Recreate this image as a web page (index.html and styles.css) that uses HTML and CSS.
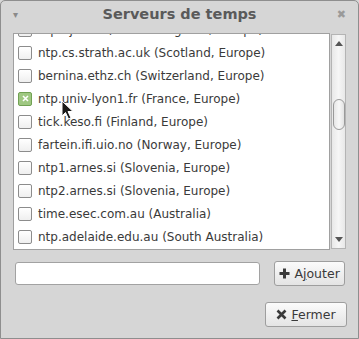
FILE: index.html
```html
<!DOCTYPE html>
<html>
<head>
<meta charset="utf-8">
<link rel="stylesheet" href="styles.css">
</head>
<body>
<div class="window">
  <div class="titlebar">
    <span class="tb-menu">&#9662;</span>
    <span class="title">Serveurs de temps</span>
    <span class="tb-close">&#10006;</span>
  </div>
  <div class="listrow">
    <div class="list">
      <div class="items">
        <div class="item"><span class="cb"></span><span class="lbl">ntp2.ja.net (United Kingdom, Europe)</span></div>
        <div class="item"><span class="cb"></span><span class="lbl">ntp.cs.strath.ac.uk (Scotland, Europe)</span></div>
        <div class="item"><span class="cb"></span><span class="lbl">bernina.ethz.ch (Switzerland, Europe)</span></div>
        <div class="item"><span class="cb checked"><svg width="7" height="7" viewBox="0 0 7 7"><path d="M1 1L6 6M6 1L1 6" stroke="#fff" stroke-width="1.6"/></svg></span><span class="lbl">ntp.univ-lyon1.fr (France, Europe)</span></div>
        <div class="item"><span class="cb"></span><span class="lbl">tick.keso.fi (Finland, Europe)</span></div>
        <div class="item"><span class="cb"></span><span class="lbl">fartein.ifi.uio.no (Norway, Europe)</span></div>
        <div class="item"><span class="cb"></span><span class="lbl">ntp1.arnes.si (Slovenia, Europe)</span></div>
        <div class="item"><span class="cb"></span><span class="lbl">ntp2.arnes.si (Slovenia, Europe)</span></div>
        <div class="item"><span class="cb"></span><span class="lbl">time.esec.com.au (Australia)</span></div>
        <div class="item"><span class="cb"></span><span class="lbl">ntp.adelaide.edu.au (South Australia)</span></div>
      </div>
    </div>
    <div class="scrollbar">
      <span class="arrow up"></span>
      <span class="thumb"></span>
      <span class="arrow down"></span>
    </div>
  </div>
  <div class="entryrow">
    <div class="entry"></div>
    <div class="btn btn-add"><svg width="11" height="11" viewBox="0 0 11 11"><path d="M4 0.5h3v3.5h3.5v3h-3.5v3.5h-3v-3.5h-3.5v-3h3.5z" fill="#3a3a3a"/></svg><span>A<u>j</u>outer</span></div>
  </div>
  <div class="bottomrow">
    <div class="btn btn-close"><svg width="11" height="11" viewBox="0 0 11 11"><path d="M1.5 1.5L9.5 9.5M9.5 1.5L1.5 9.5" stroke="#3a3a3a" stroke-width="2.6"/></svg><span><u>F</u>ermer</span></div>
  </div>
  <svg class="cursor" width="14" height="20" viewBox="0 0 14 20"><path d="M1 1L1 16L4.5 12.5L7.5 19L10 18L7 11.5L12 11.5Z" fill="#1a1a1a" stroke="#fff" stroke-width="1"/></svg>
</div>
</body>
</html>
```
FILE: styles.css
```css
* { box-sizing: border-box; }
html, body { margin: 0; padding: 0; background: #d6d6d6; }
body { width: 359px; height: 339px; overflow: hidden; font-family: "DejaVu Sans", sans-serif; }
.window {
  position: relative;
  width: 359px; height: 339px;
  background: #d6d6d6;
  border: 1px solid #8e8e8e;
  border-radius: 5px 5px 0 0;
  display: flex; flex-direction: column;
}
.titlebar {
  height: 32px; flex: none;
  display: flex; align-items: center; justify-content: space-between;
  padding: 0 12px 6px 12px;
  color: #5e5e5e;
}
.title { font-weight: bold; font-size: 14.5px; color: #5a5a5a; }
.tb-menu { font-size: 10px; color: #8a8a8a; width: 12px; }
.tb-close { font-size: 11px; color: #9a9a9a; width: 12px; text-align: right; }
.listrow { display: flex; padding-left: 12px; height: 217px; gap: 1px; flex: none; }
.list {
  width: 317px; height: 217px;
  background: #fff;
  border: 1px solid #a0a0a0;
  overflow: hidden;
}
.items { margin-top: -16px; }
.item { height: 23px; display: flex; align-items: center; padding-left: 4px; }
.cb {
  width: 14px; height: 14px; flex: none;
  border: 1px solid #8c8c8c; border-radius: 2px;
  background: linear-gradient(#fff, #efefef);
  display: flex; align-items: center; justify-content: center;
}
.cb.checked { background: #9fc882; border-color: #71a154; }
.lbl { margin-left: 6px; font-size: 12px; color: #3a3a3a; white-space: nowrap; }
.scrollbar {
  width: 15px; height: 215px; margin-top: 1px;
  border: 1px solid #b4b4b4;
  background: linear-gradient(90deg, #e8e8e8, #f6f6f6, #e8e8e8);
  display: flex; flex-direction: column; align-items: center;
  padding: 6px 0 6px;
}
.arrow { width: 0; height: 0; border-left: 4px solid transparent; border-right: 4px solid transparent; }
.arrow.up { border-bottom: 5px solid #555; }
.arrow.down { border-top: 5px solid #555; margin-top: auto; }
.thumb {
  width: 12px; height: 31px; margin-top: 53px;
  border: 1px solid #9a9a9a; border-radius: 6px;
  background: linear-gradient(90deg, #e6e6e6, #f8f8f8, #e2e2e2);
}
.entryrow { display: flex; align-items: center; padding: 11px 13px 0 14px; gap: 14px; }
.entry {
  width: 246px; height: 23px;
  background: #fff; border: 1px solid #a2a2a2; border-radius: 3px;
}
.btn {
  display: flex; align-items: center; justify-content: center; gap: 4px;
  height: 25px;
  border: 1px solid #9e9e9e; border-radius: 3px;
  background: linear-gradient(#fbfbfb, #e4e4e4);
  font-size: 12.5px; color: #3a3a3a;
}
.btn-add { width: 71px; }
.bottomrow { display: flex; justify-content: flex-end; padding: 16px 11px 0 0; }
.btn-close { width: 82px; }
.cursor { position: absolute; left: 60px; top: 99px; }
```
